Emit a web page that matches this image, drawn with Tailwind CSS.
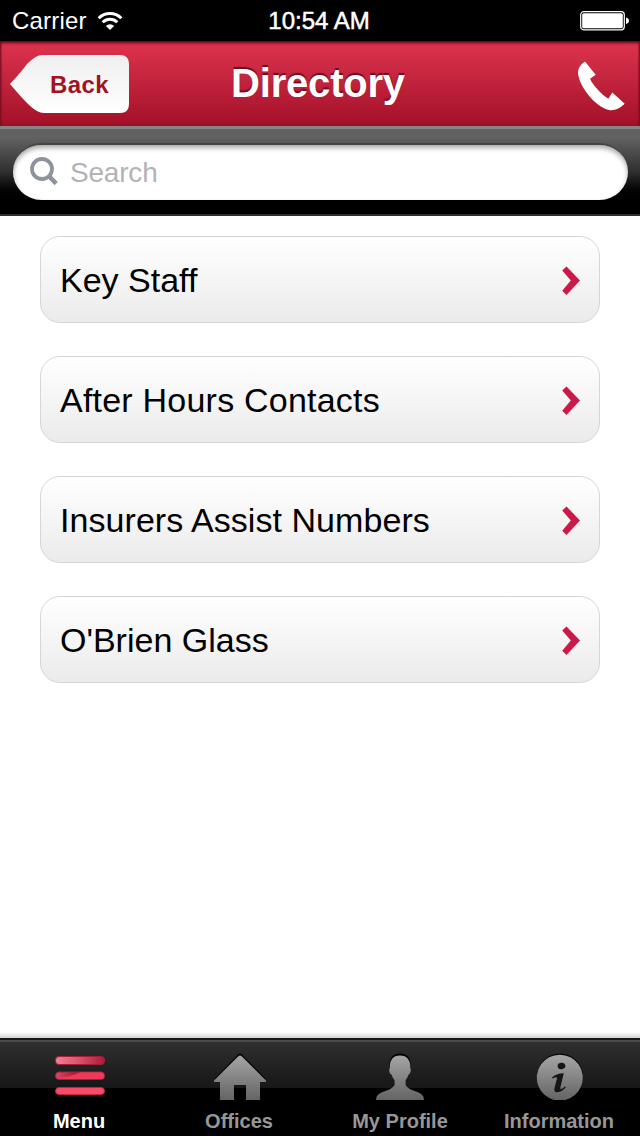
<!DOCTYPE html>
<html lang="en">
  <head>
    <meta charset="UTF-8" />
    <meta name="viewport" content="width=device-width, initial-scale=1.0" />
    <script src="https://cdn.jsdelivr.net/npm/@tailwindcss/browser@4"></script>
    <title>Directory</title>
  </head>
  <body class="bg-white">
    <div
      class="flex flex-col w-[640px] h-[1136px] overflow-hidden bg-white font-['Liberation_Sans',Arial,sans-serif]"
    >
      <!-- status bar -->
      <div class="grid grid-cols-3 items-center h-[41px] shrink-0 bg-black text-white text-2xl leading-[41px]">
        <div class="flex items-center pl-3">
          <span class="tracking-[0.2px]">Carrier</span>
          <svg class="ml-2.5 w-[26px] h-[20px]" viewBox="0 0 26 20" fill="none" stroke="#fff" stroke-width="3">
            <path d="M1.7 7.2a16 16 0 0 1 22.6 0" />
            <path d="M5.7 11.2a10.3 10.3 0 0 1 14.6 0" />
            <path d="M13 19l-4.1-4.1a5.8 5.8 0 0 1 8.2 0z" fill="#fff" stroke="none" />
          </svg>
        </div>
        <div class="pr-0.5 text-center [-webkit-text-stroke:0.5px_#fff]">10:54 AM</div>
        <div class="flex justify-end pr-[10px]">
          <svg class="w-[50px] h-[20px]" viewBox="0 0 50 20">
            <rect x=".7" y=".7" width="43.6" height="18.1" rx="3" fill="none" stroke="#fff" stroke-width="1.2" />
            <rect x="2.2" y="2.2" width="40.6" height="15.1" rx="1.6" fill="#fff" />
            <path d="M46 6.5q3 .8 3 3.3t-3 3.3z" fill="#fff" />
          </svg>
        </div>
      </div>

      <!-- header -->
      <div
        class="flex items-center justify-between h-[85px] shrink-0 pl-[10px] pr-[14px] bg-linear-to-b from-[#df3350] to-[#a30f28] shadow-[inset_0_2px_3px_#5a0a18,inset_1px_0_2px_#8b1226,inset_-1px_0_2px_#8b1226]"
      >
        <div class="grid items-center w-[120px] h-[60px]">
          <svg class="col-start-1 row-start-1 w-[120px] h-[60px]" viewBox="0 0 120 60">
            <defs>
              <linearGradient id="back" x2="0" y2="1">
                <stop stop-color="#efefef" />
                <stop offset="1" stop-color="#fff" />
              </linearGradient>
            </defs>
            <path
              d="M0 30Q12 17 17 10Q26 1 32 1H110Q119 1 119 10V50Q119 59 110 59H34Q27 59 18 50Q11 43 0 30z"
              fill="url(#back)"
            />
          </svg>
          <span class="col-start-1 row-start-1 pt-0.5 pl-[40px] text-2xl font-bold tracking-[0.4px] text-[#a3121f]">Back</span>
        </div>
        <h1 class="pb-[2px] pr-[70px] text-[40px] leading-[48px] font-bold tracking-[-0.2px] text-white [text-shadow:0_-2px_1px_#6d0b1c]">
          Directory
        </h1>
        <svg class="w-[50px] h-[54px]" viewBox="0 0 50 54" fill="#fff">
          <path
            d="M9 4.500Q2 9 2 16C3.500 31 20 49.500 32 52.700Q40 55 48.700 46.800L36.300 35.500L32.300 41.800C26 38 17 28.500 14 21.800L19.700 17.800z"
          />
        </svg>
      </div>

      <!-- search bar -->
      <div
        class="h-[90px] shrink-0 pl-[13px] pr-3 pt-[14px] border-t-3 border-t-[#858585] border-b-2 border-b-[#302e30] bg-linear-to-b from-[#626262] from-10% via-[#303030] via-50% to-black to-85%"
      >
        <div
          class="flex items-center h-[57px] pl-[17px] rounded-full bg-white border-t-2 border-[#444] shadow-[inset_0_3px_5px_#aaa]"
        >
          <svg class="mb-0.5 w-[30px] h-[30px]" viewBox="0 0 30 30" fill="none" stroke="#8f949c">
            <circle cx="12" cy="12" r="10" stroke-width="3.800" />
            <path d="M18.800 19l7.400 7.600" stroke-width="4.600" />
          </svg>
          <span class="ml-[10px] text-[28px] leading-8 text-[#b3b3b3] tracking-[-0.2px]">Search</span>
        </div>
      </div>

      <!-- list -->
      <div class="flex flex-col gap-[33px] px-10 pt-5 grow text-[34px] leading-10 text-black">
        <div
          class="flex items-center justify-between h-[87px] pl-[19px] pr-[19px] rounded-[20px] border border-[#d6d6d6] bg-linear-to-b from-white to-[#ebebeb]"
        >
          <span>Key Staff</span>
          <svg class="w-[19px] h-[30px]" viewBox="0 0 19 30"><path d="M5.500 1.500L19 15.500L5.500 30L1.200 25.800L9.800 15.500L1.200 5.600z" fill="#cb1a47" /></svg>
        </div>
        <div
          class="flex items-center justify-between h-[87px] pl-[19px] pr-[19px] rounded-[20px] border border-[#d6d6d6] bg-linear-to-b from-white to-[#ebebeb]"
        >
          <span class="tracking-[0.22px]">After Hours Contacts</span>
          <svg class="w-[19px] h-[30px]" viewBox="0 0 19 30"><path d="M5.500 1.500L19 15.500L5.500 30L1.200 25.800L9.800 15.500L1.200 5.600z" fill="#cb1a47" /></svg>
        </div>
        <div
          class="flex items-center justify-between h-[87px] pl-[19px] pr-[19px] rounded-[20px] border border-[#d6d6d6] bg-linear-to-b from-white to-[#ebebeb]"
        >
          <span class="tracking-[0.06px]">Insurers Assist Numbers</span>
          <svg class="w-[19px] h-[30px]" viewBox="0 0 19 30"><path d="M5.500 1.500L19 15.500L5.500 30L1.200 25.800L9.800 15.500L1.200 5.600z" fill="#cb1a47" /></svg>
        </div>
        <div
          class="flex items-center justify-between h-[87px] pl-[19px] pr-[19px] rounded-[20px] border border-[#d6d6d6] bg-linear-to-b from-white to-[#ebebeb]"
        >
          <span>O'Brien Glass</span>
          <svg class="w-[19px] h-[30px]" viewBox="0 0 19 30"><path d="M5.500 1.500L19 15.500L5.500 30L1.200 25.800L9.800 15.500L1.200 5.600z" fill="#cb1a47" /></svg>
        </div>
      </div>

      <!-- tab bar -->
      <div class="h-[6px] shrink-0 bg-linear-to-b from-white to-[#d4d4d4]"></div>
      <div
        class="grid grid-cols-4 h-[98px] shrink-0 border-t-2 border-[#181818] bg-black bg-linear-to-b from-[#303030] from-0% via-[#171717] via-50% to-black to-50% shadow-[inset_0_2px_0_#4b4b4b] text-xl leading-6 font-bold text-[#979797]"
      >
        <div class="flex flex-col items-center pt-3">
          <svg class="w-[60px] h-[54px]" viewBox="0 0 60 54">
            <defs>
              <linearGradient id="bar1">
                <stop stop-color="#f28094" />
                <stop offset=".45" stop-color="#dc5570" />
                <stop offset="1" stop-color="#a91c37" />
              </linearGradient>
              <linearGradient id="bar2">
                <stop stop-color="#d54c64" />
                <stop offset=".4" stop-color="#a91d36" />
                <stop offset=".55" stop-color="#e53554" />
                <stop offset="1" stop-color="#f53b5d" />
              </linearGradient>
            </defs>
            <rect x="5.500" y="4.500" width="49" height="8" rx="3.500" fill="url(#bar1)" stroke="#a51f38" />
            <rect x="5.500" y="20" width="49" height="7.500" rx="3.500" fill="url(#bar2)" stroke="#a51f38" />
            <path d="M7 26.500Q20 24.500 31 20.500H51Q54 21 54 24Q54 27 51 27H9z" fill="#ee3959" />
            <rect x="5.500" y="35.500" width="49" height="7" rx="3.500" fill="#f84b69" stroke="#c42443" />
          </svg>
          <span class="mt-[3px] pr-0.5 text-white">Menu</span>
        </div>
        <div class="flex flex-col items-center pt-3">
          <svg class="w-[60px] h-[54px]" viewBox="0 0 60 54">
            <defs>
              <linearGradient id="gray" gradientUnits="userSpaceOnUse" x1="0" y1="3" x2="0" y2="48">
                <stop stop-color="#a6a6a6" />
                <stop offset="1" stop-color="#646464" />
              </linearGradient>
            </defs>
            <path d="M4 29L28 4q2-2 4 0L56.500 29z" fill="#050505" transform="translate(0 -1.500)" />
            <path
              d="M28.300 4.200Q30 2.800 31.700 4.200L56 28.500V30H50V48H36V33H24V48H10V30H4V28.500z"
              fill="url(#gray)"
            />
          </svg>
          <span class="mt-[3px] pr-0.5">Offices</span>
        </div>
        <div class="flex flex-col items-center pt-3">
          <svg class="w-[60px] h-[54px]" viewBox="0 0 60 54">
            <path d="M20 18Q17 2 30 1.500Q43 2 40 18z" fill="#050505" />
            <path
              d="M30 3.500Q40.500 3.500 40.300 16Q41.500 17.500 40.200 20.500Q39.800 22.500 38.600 22.500Q37.500 26 35.600 28V33Q38 37 46 39.500Q54.500 42 54 48H6Q5.500 42 14 39.500Q22 37 24.600 33V28Q22.500 26 21.500 22.500Q20 22.500 19.700 20.500Q18.500 17.500 19.800 16Q19.500 3.500 30 3.500z"
              fill="url(#gray)"
            />
          </svg>
          <span class="mt-[3px]">My Profile</span>
        </div>
        <div class="flex flex-col items-center pt-3">
          <svg class="w-[60px] h-[54px]" viewBox="0 0 60 54">
            <circle cx="30" cy="24.500" r="23" fill="#050505" />
            <path d="M24.200 48A23 23 0 1 1 35.400 48z" fill="url(#gray)" />
            <ellipse cx="31.500" cy="14" rx="3.900" ry="3.200" fill="#151515" transform="rotate(-10 31.500 14)" />
            <path
              d="M22 25.500Q26 21.500 33.800 21.300L30.300 35.500Q30 38 32 36.800L35.200 34.500Q36.200 35 35.500 35.800Q31 40.500 26.300 40.300Q23.800 40 24.500 36L27 26.500Q27 24.500 24.800 25.500L22.700 26.600z"
              fill="#151515"
            />
          </svg>
          <span class="mt-[3px] pr-0.5">Information</span>
        </div>
      </div>
    </div>
  </body>
</html>
